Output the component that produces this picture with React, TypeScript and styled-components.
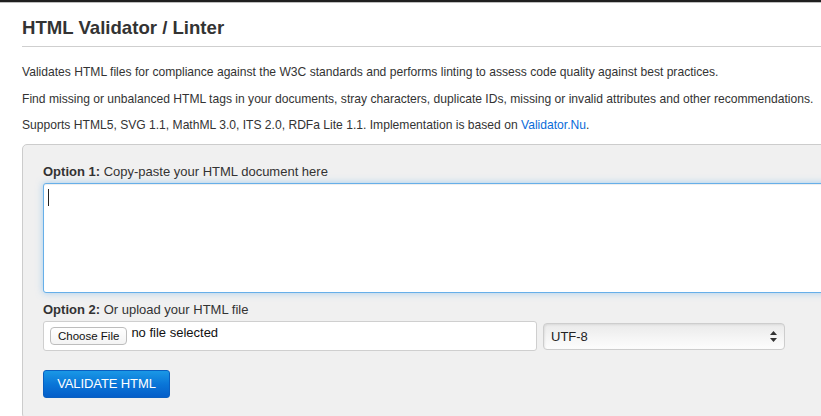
import React from "react";
import styled, { createGlobalStyle } from "styled-components";

const Global = createGlobalStyle`
  html, body { margin: 0; padding: 0; background: #fff; overflow: hidden; }
  body { font-family: "Liberation Sans", Arial, Helvetica, sans-serif; color: #333; }
`;

const TopBar = styled.div`
  height: 2px;
  background: #1f1f1f;
  border-bottom: 1px solid #bdbdbd;
`;

const Page = styled.main`
  width: 1100px;
  padding: 0 0 0 22px;
`;

const Title = styled.h1`
  margin: 13px 0 0;
  font-size: 18.6px;
  line-height: 24px;
  font-weight: bold;
  color: #333;
`;

const Rule = styled.hr`
  margin: 6px 0 0;
  border: 0;
  border-top: 1px solid #cfcfcf;
`;

const Intro = styled.div`
  padding-top: 17px;
`;

const Para = styled.p`
  margin: 0 0 9.6px;
  font-size: 12.1px;
  line-height: 17px;
  color: #333;
`;

const Link = styled.a`
  color: #0a6bd9;
  text-decoration: none;
`;

const Well = styled.form`
  margin-top: 4px;
  background: #f0f0f0;
  border: 1px solid #cccccc;
  border-radius: 5px;
  padding: 19px 20px 20px;
  width: 1000px;
`;

const Label = styled.div`
  font-size: 13px;
  line-height: 16px;
  color: #333;
  margin-bottom: 3px;
  b { font-weight: bold; }
`;

const TextArea = styled.textarea`
  display: block;
  box-sizing: border-box;
  width: 100%;
  height: 110px;
  margin: 0 0 9px;
  padding: 6px 8px;
  border: 1px solid #66afe9;
  border-radius: 3px;
  background: #fff;
  outline: none;
  resize: none;
  font: 13px "Liberation Mono", monospace;
  box-shadow: inset 0 1px 1px rgba(0,0,0,.075), 0 0 7px rgba(102,175,233,.55);
`;

const Caret = styled.span`
  position: absolute;
  left: 5px;
  top: 6px;
  width: 1px;
  height: 17px;
  background: #222;
`;

const AreaWrap = styled.div`
  position: relative;
`;

const UploadRow = styled.div`
  display: flex;
  gap: 6px;
  align-items: flex-start;
`;

const FileBox = styled.label`
  box-sizing: border-box;
  width: 494px;
  height: 30px;
  background: #fff;
  border: 1px solid #cfcfcf;
  border-radius: 3px;
  display: flex;
  align-items: flex-start;
  padding: 5px 0 0 6px;
  gap: 4px;
  cursor: pointer;
`;

const ChooseBtn = styled.span`
  box-sizing: border-box;
  display: inline-flex;
  align-items: center;
  height: 18px;
  padding: 0 7px;
  border: 1px solid #bdbdbd;
  border-radius: 4px;
  background: linear-gradient(#ffffff, #f3f3f3);
  font-size: 11.5px;
  color: #111;
`;

const NoFile = styled.span`
  font-size: 13px;
  line-height: 14px;
  color: #111;
  margin-top: -1px;
`;

const HiddenInput = styled.input`
  display: none;
`;

const SelectWrap = styled.div`
  position: relative;
  margin-top: 2px;
  width: 242px;
  height: 27px;
`;

const Select = styled.select`
  appearance: none;
  -webkit-appearance: none;
  box-sizing: border-box;
  width: 100%;
  height: 100%;
  border: 1px solid #cdcdcd;
  border-radius: 4px;
  background: linear-gradient(#eaeaea, #f6f6f6 60%, #fdfdfd);
  box-shadow: inset 1px 1px 2px rgba(0,0,0,.08);
  padding: 0 0 0 7px;
  font: 13px "Liberation Sans", Arial, sans-serif;
  color: #222;
  outline: none;
`;

const Arrows = styled.svg`
  position: absolute;
  right: 8px;
  top: 8px;
  pointer-events: none;
`;

const SubmitBtn = styled.button`
  margin-top: 19px;
  box-sizing: border-box;
  width: 127px;
  height: 28px;
  border: 1px solid #0a5fc0;
  border-radius: 3px;
  background: linear-gradient(#1a98e6, #0a76d8 50%, #045ec9);
  color: #fff;
  font: 13px "Liberation Sans", Arial, sans-serif;
  text-transform: uppercase;
  letter-spacing: -0.1px;
  cursor: pointer;
`;

export default function App() {
  return (
    <>
      <Global />
      <TopBar />
      <Page>
        <Title>HTML Validator / Linter</Title>
        <Rule />
        <Intro>
          <Para>
            Validates HTML files for compliance against the W3C standards and performs linting to assess code quality against best practices.
          </Para>
          <Para>
            Find missing or unbalanced HTML tags in your documents, stray characters, duplicate IDs, missing or invalid attributes and other recommendations.
          </Para>
          <Para>
            Supports HTML5, SVG 1.1, MathML 3.0, ITS 2.0, RDFa Lite 1.1. Implementation is based on <Link href="#">Validator.Nu</Link>.
          </Para>
        </Intro>
        <Well onSubmit={(e) => e.preventDefault()}>
          <Label>
            <b>Option 1:</b> Copy-paste your HTML document here
          </Label>
          <AreaWrap>
            <TextArea />
            <Caret />
          </AreaWrap>
          <Label>
            <b>Option 2:</b> Or upload your HTML file
          </Label>
          <UploadRow>
            <FileBox>
              <HiddenInput type="file" />
              <ChooseBtn>Choose File</ChooseBtn>
              <NoFile>no file selected</NoFile>
            </FileBox>
            <SelectWrap>
              <Select defaultValue="UTF-8">
                <option>UTF-8</option>
                <option>ISO-8859-1</option>
                <option>Windows-1252</option>
              </Select>
              <Arrows width="7" height="11" viewBox="0 0 7 11">
                <path d="M3.5 0 L7 4 L0 4 Z" fill="#333" />
                <path d="M3.5 11 L7 7 L0 7 Z" fill="#333" />
              </Arrows>
            </SelectWrap>
          </UploadRow>
          <SubmitBtn type="submit">Validate HTML</SubmitBtn>
        </Well>
      </Page>
    </>
  );
}
